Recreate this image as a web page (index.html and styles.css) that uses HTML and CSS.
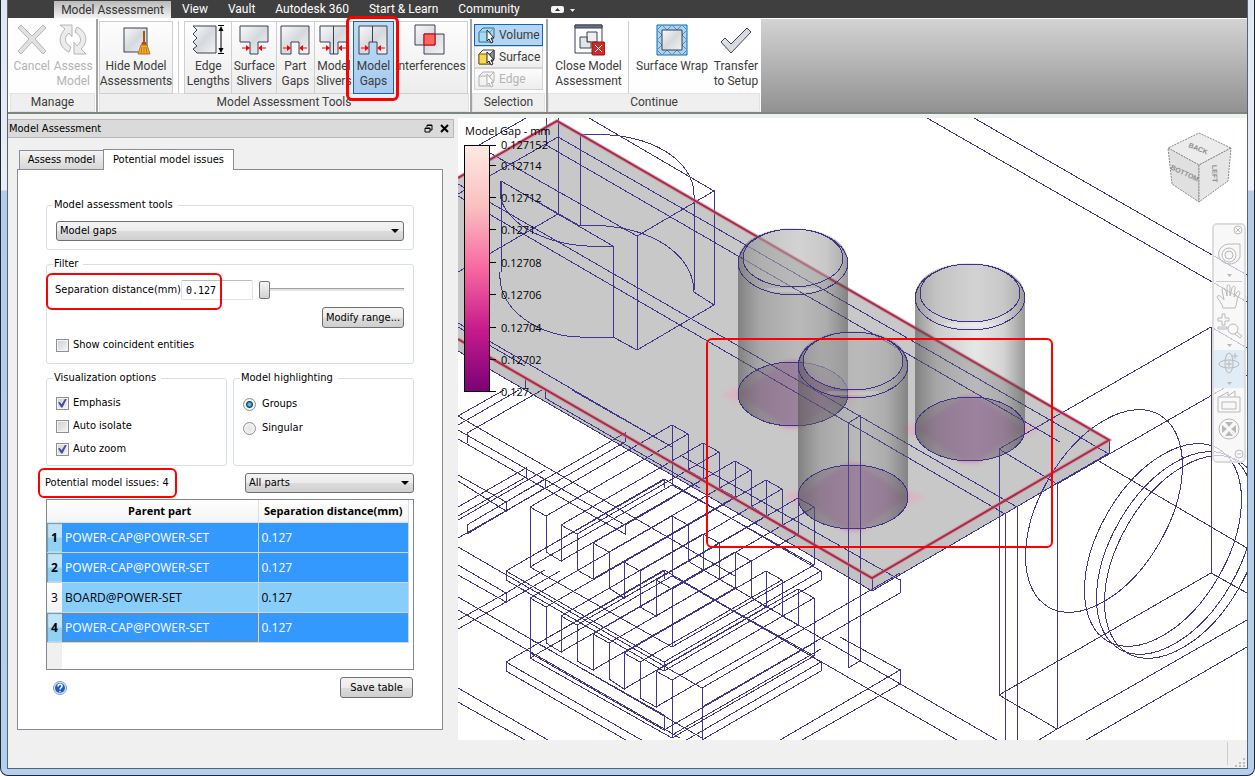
FILE: index.html
```html
<!DOCTYPE html>
<html lang="en">
<head>
<meta charset="utf-8">
<title>Model Assessment</title>
<link rel="stylesheet" href="styles.css">
</head>
<body>
<div class="window">
<div class="client">
<header class="ribbon">
  <nav class="tabs">
    <button class="tab active">Model Assessment</button>
    <button class="tab">View</button>
    <button class="tab">Vault</button>
    <button class="tab">Autodesk 360</button>
    <button class="tab">Start &amp; Learn</button>
    <button class="tab">Community</button>
    <button class="tab pill" aria-label="Minimize ribbon"><svg width="28" height="14" viewBox="0 0 28 14"><rect x="1" y="4" width="13" height="7" rx="2" fill="#f4f4f4"/><path d="M5 9l2.500-3L10 9z" fill="#333"/><path d="M20 7h5l-2.500 3z" fill="#eee"/></svg></button>
  </nav>
  <div class="panels">
    <section class="panel manage">
      <div class="tools">
        <button class="tool" disabled><svg class="icon" viewBox="0 0 32 32"><path d="M2 4l3-3 11 11L27 1l3 3-11 11 11 12-3 3-11-12L5 30l-3-3 11-12z" fill="#e2e2e2" stroke="#b5b5b5"/></svg><span>Cancel</span></button>
        <button class="tool" disabled><svg class="icon" viewBox="0 0 32 32"><path d="M3 1h12v12l-3-4c-5 4-5 10 2 14l-2 5C1 23 1 12 8 5zM29 30H17V18l3 4c5-4 5-10-2-14l2-5c11 5 11 16 4 22z" fill="#ececec" stroke="#b5b5b5"/></svg><span>Assess<br>Model</span></button>
      </div>
      <h2>Manage</h2>
    </section>
    <section class="panel assess">
      <div class="tools">
        <button class="tool boxed hide"><svg class="icon" viewBox="0 0 32 32"><rect x="4" y="4" width="23" height="24" fill="url(#steel)" stroke="#3b4150"/><path d="M23 7h2v12h-2z" fill="#9a5a1c"/><path d="M22 18h4l1 4H21z" fill="#b84a20"/><path d="M21 21h6l3 9H18z" fill="#f2b32c" stroke="#b9771a"/><path d="M22 23l-1 7M24 23v7M26 23l1 7" stroke="#b9771a"/></svg><span>Hide Model<br>Assessments</span></button>
        <i class="rule"></i>
        <button class="tool boxed edge"><svg class="icon" viewBox="0 0 32 32"><path d="M24 2H1l4 4-4 4 4 4-4 4 4 4-4 3 4 4h19z" fill="url(#steel)" stroke="#3b4150"/><path d="M26 1.500h6M26 29.500h6M29 4v23" stroke="#000"/><path d="M29 2l2.500 5h-5zM29 29l2.500-5h-5z"/></svg><span>Edge<br>Lengths</span></button>
        <button class="tool boxed surf"><svg class="icon" viewBox="0 0 32 32"><path d="M2 2h28v16H20v12h-8V18H2z" fill="url(#steel)" stroke="#3b4150"/><g id="inward" fill="#f00" stroke="#f00"><path d="M4 24h5M28 24h-5"/><path d="M12 24l-4-3v6zM20 24l4-3v6z" stroke="none"/></g></svg><span>Surface<br>Slivers</span></button>
        <button class="tool boxed gaps"><svg class="icon" viewBox="0 0 32 32"><path d="M2 2h28v28H20V18h-8v12H2z" fill="url(#steel)" stroke="#3b4150"/><use href="#inward"/></svg><span>Part<br>Gaps</span></button>
        <button class="tool boxed"><svg class="icon" viewBox="0 0 32 32"><path d="M2 2h28v16H20v12h-8V18H2z" fill="url(#steel)" stroke="#3b4150"/><path d="M15.500 2v28" stroke="#3b4150"/><use href="#inward"/></svg><span>Model<br>Slivers</span></button>
        <button class="tool boxed picked"><svg class="icon" viewBox="0 0 32 32"><path d="M2 2h28v28H20V18h-8v12H2z" fill="url(#steel)" stroke="#3b4150"/><path d="M15.500 2v16" stroke="#3b4150"/><use href="#inward"/></svg><span>Model<br>Gaps</span><i class="callout"></i></button>
        <button class="tool boxed inter"><svg class="icon" viewBox="0 0 32 32"><path d="M1 1h20v20H1zM10 10h20v20H10z" fill="url(#steel)" stroke="#3b4150"/><path d="M10 10h11v11H10z" fill="#ff6464" stroke="#c00000"/></svg><span>Interferences</span></button>
      </div>
      <h2>Model Assessment Tools</h2>
    </section>
    <section class="panel selection">
      <div class="modes">
        <button class="mode picked"><svg width="18" height="18" viewBox="0 0 18 18"><path d="M1 6l4-4h11v9l-4 5H1z" fill="#a6dcf3" stroke="#2c6a92"/><path d="M1 6h11v10M12 6l4-4" fill="none" stroke="#5fa0c4"/><path id="pointer" d="M9 4v11l2-2 2 4 2-1-2-4h3z" fill="#fff" stroke="#222"/></svg>Volume</button>
        <button class="mode"><svg width="18" height="18" viewBox="0 0 18 18"><path d="M1 6l4-4h11v9l-4 5H1z" fill="#f4f4f4" stroke="#444"/><path d="M1 6h11v10H1z" fill="#f6d94c" stroke="#7a6410"/><path d="M12 6l4-4v9l-4 5z" fill="#8b93a3" stroke="#444"/><use href="#pointer"/></svg>Surface</button>
        <button class="mode" disabled><svg width="18" height="18" viewBox="0 0 18 18" fill="none" stroke="#b0b0b0"><path d="M1 6l4-4h11v9l-4 5H1zM1 6h11v10M12 6l4-4"/><path d="M9 4v11l2-2 2 4 2-1-2-4h3z" fill="#fff"/></svg>Edge</button>
      </div>
      <h2>Selection</h2>
    </section>
    <section class="panel continue">
      <div class="tools">
        <button class="tool close"><svg class="icon" viewBox="0 0 32 32"><path d="M2 1h27v28H2z" fill="#fff" stroke="#3b4150"/><path d="M2 1h27v3H2z" fill="#6d7482" stroke="#3b4150"/><path d="M14 8h10v10H14z" fill="#eee" stroke="#3b4150"/><path d="M14 13H7v11h11v-6h-4z" fill="#e2e4e8" stroke="#3b4150"/><rect x="19" y="18" width="13" height="13" rx="1" fill="#cf2a27" stroke="#8e1512"/><path d="M22 21l7 7M29 21l-7 7" stroke="#fff"/></svg><span>Close Model<br>Assessment</span></button>
        <i class="rule"></i>
        <button class="tool wrap"><svg class="icon" viewBox="0 0 32 32"><path d="M1 1h30v30H1z" fill="#a9d3ee" stroke="#1467ab"/><path d="M1 6l5-5 5 5 5-5 5 5 5-5 5 5-5 5 5 5-5 5 5 5-5 5-5-5-5 5-5-5-5 5-5-5 5-5-5-5 5-5z" fill="none" stroke="#4d93c6"/><path d="M6 6h20v20H6z" fill="url(#steel)" stroke="#3b4150"/></svg><span>Surface Wrap</span></button>
        <button class="tool transfer"><svg class="icon" viewBox="0 0 32 32"><path d="M1 18l4-4 6 6L27 4l4 4-20 21z" fill="url(#steel)" stroke="#3b4150"/></svg><span>Transfer<br>to Setup</span></button>
      </div>
      <h2>Continue</h2>
    </section>
  </div>
</header>
<main class="workspace">
  <aside class="dock">
    <div class="dock-title"><h1>Model Assessment</h1>
      <button aria-label="Float"><svg width="9" height="9" viewBox="0 0 9 9" fill="none" stroke="#000"><path d="M3 3V1h5v5H6M3 1.500h5"/><path d="M1 4h5v4H1zM1 4.500h5"/></svg></button>
      <button aria-label="Close"><svg width="9" height="9" viewBox="0 0 9 9" stroke="#000" stroke-width="2"><path d="M1 1l7 7M8 1L1 8"/></svg></button>
    </div>
    <div class="page-tabs" role="tablist">
      <button role="tab">Assess model</button>
      <button role="tab" class="current" aria-selected="true">Potential model issues</button>
    </div>
    <div class="page">
      <fieldset class="tools-box">
        <legend>Model assessment tools</legend>
        <span class="drop"><select aria-label="Model assessment tools"><option>Model gaps</option></select></span>
      </fieldset>
      <fieldset class="filter-box">
        <legend>Filter</legend>
        <div class="distance">
          <label for="distance">Separation distance(mm)</label>
          <input id="distance" type="text" value="0.127">
          <input class="slider" type="range" value="0" aria-label="Separation distance slider">
          <i class="callout"></i>
        </div>
        <button class="push modify">Modify range...</button>
        <label class="check coincident"><input type="checkbox">Show coincident entities</label>
      </fieldset>
      <div class="pair">
        <fieldset class="visual-box">
          <legend>Visualization options</legend>
          <label class="check"><input type="checkbox" checked>Emphasis</label>
          <label class="check"><input type="checkbox">Auto isolate</label>
          <label class="check"><input type="checkbox" checked>Auto zoom</label>
        </fieldset>
        <fieldset class="highlight-box">
          <legend>Model highlighting</legend>
          <label class="check"><input type="radio" name="mode" checked>Groups</label>
          <label class="check"><input type="radio" name="mode">Singular</label>
        </fieldset>
      </div>
      <div class="issues">
        <p>Potential model issues: 4<i class="callout"></i></p>
        <span class="drop"><select aria-label="Parts"><option>All parts</option></select></span>
      </div>
      <div class="grid">
        <table>
          <thead><tr><th></th><th>Parent part</th><th>Separation distance(mm)</th></tr></thead>
          <tbody>
            <tr class="on"><th>1</th><td>POWER-CAP@POWER-SET</td><td>0.127</td></tr>
            <tr class="on"><th>2</th><td>POWER-CAP@POWER-SET</td><td>0.127</td></tr>
            <tr class="part"><th>3</th><td>BOARD@POWER-SET</td><td>0.127</td></tr>
            <tr class="on"><th>4</th><td class="focus">POWER-CAP@POWER-SET</td><td>0.127</td></tr>
          </tbody>
        </table>
      </div>
      <div class="foot">
        <button class="help" aria-label="Help"><svg width="14" height="14" viewBox="0 0 14 14"><circle cx="7" cy="7" r="6.500" fill="#dfeaf8" stroke="#7b9cc9"/><circle cx="7" cy="7" r="5" fill="#1d5bd0"/><path d="M5 5.500c0-3 4-3 4-.5 0 2-2 1.500-2 3.500M7 10v1.300" fill="none" stroke="#fff" stroke-width="1.500"/></svg></button>
        <button class="push save">Save table</button>
      </div>
    </div>
  </aside>
  <section class="viewport">
    <svg class="scene" viewBox="458 118 789 622" preserveAspectRatio="xMinYMin slice">
      <defs>
        <linearGradient id="steel" x2="1" y2="1"><stop stop-color="#fafafa"/><stop offset=".5" stop-color="#d5d8dd"/><stop offset="1" stop-color="#f4f4f4"/></linearGradient>
        <linearGradient id="scale" x2="0" y2="1"><stop stop-color="#fee9e2"/><stop offset=".25" stop-color="#fabfc0"/><stop offset=".5" stop-color="#f768a1"/><stop offset=".75" stop-color="#c51b8a"/><stop offset="1" stop-color="#7a0177"/></linearGradient>
        <linearGradient id="tube"><stop stop-color="#555" stop-opacity=".62"/><stop offset=".2" stop-color="#666" stop-opacity=".34"/><stop offset=".55" stop-color="#777" stop-opacity=".18"/><stop offset=".8" stop-color="#666" stop-opacity=".28"/><stop offset="1" stop-color="#555" stop-opacity=".6"/></linearGradient>
        <filter id="soft" x="-20%" y="-20%" width="140%" height="140%"><feGaussianBlur stdDeviation="2"/></filter>
        <g id="footprint">
          <path d="M-72 0L-45-11 0-37 45-11 72 0 45 14 8 36H-8L-45 14z" fill="#e6a9bd" opacity=".55" filter="url(#soft)"/>
          <ellipse rx="55" ry="32" fill="#a79aa7"/>
          <path d="M-55 0L-8-32H8L55 0 8 32H-8z" fill="#a585a6" filter="url(#soft)"/>
        </g>
        <g id="can">
          <path d="M-55-132C-55-152-31-166 0-166S55-152 55-132V0C55 18 31 32 0 32S-55 18-55 0z" fill="url(#tube)"/>
          <ellipse cy="-136" rx="50" ry="29" fill="#bbb" fill-opacity=".45"/>
          <path d="M-26-105C-10-102 10-102 26-105" fill="none" stroke="#fff" stroke-opacity=".45" stroke-width="3" filter="url(#soft)"/>
          <g fill="none" stroke="#3d3488" shape-rendering="crispEdges"><ellipse rx="55" ry="32"/><ellipse cy="-136" rx="50" ry="29"/><path d="M-55-132C-55-114-31-99 0-99S55-114 55-132C53-150 31-165 0-165S-53-150-55-132"/></g>
        </g>
        <g id="sink">
          <path d="M530 567V507L546 516V552L561 561V525L577 534V570L593 579V543L609 552V588L624 598V562L640 571V607L656 616V580L672 589V647M672 485V425L688 434V470L703 479V443L719 452V488L735 497V461L751 470V506L766 516V480L782 489V525L798 534V498L814 507V565"/>
          <path d="M530 507L672 425M546 516L688 434M561 525L703 443M577 534L719 452M561 561L703 479M593 543L735 461M593 579L735 497M609 552L751 470M624 562L766 480M624 598L766 516M640 571L782 489M656 580L798 498M656 616L798 534M672 589L814 507"/>
          <path d="M530 567L672 647L814 565L672 485ZM506 571L664 479L821 571L664 662ZM506 580L664 671L821 580M506 571v9M664 479v9M821 571v9M664 662v9M530 557L664 480"/>
        </g>
      </defs>
      <rect x="458" y="118" width="789" height="622" fill="#fff"/>
      <path d="M458 178L557 121L1109 440V453L872 591L458 351Z" fill="#c8c8c8"/>
      <path d="M458 340L872 578L1109 440V453L872 591L458 351Z" fill="#c2c2c2"/>
      <use href="#footprint" x="793" y="394"/><use href="#footprint" x="970" y="429"/><use href="#footprint" x="853" y="497"/>
      <g class="wire">
        <path d="M526 118L479 145M546 118V145M558 118V214M546 145L1060 442M558 137L1109 454M558 137L458 194M558 214L458 272M490 153L637 236L714 191V305L637 350V236M589 118L714 191M501 181L613 246V337L637 350M501 181V272M580 135V226M580 135C650 130 694 160 694 195V200V290M580 226C640 221 694 250 694 292L714 305M580 226L501 181M500 181V195C505 225 550 250 613 246M500 272C497 310 540 337 580 337H613"/>
        <path d="M458 184L1017 507M458 196L1005 514M848 423L860 416V661L848 668ZM1005 514V740M1017 507V740M458 323L672 447M458 327L525 366M572 390L672 447"/>
        <path d="M927 118L1247 302M974 118L1247 275M1211 327L1247 348M1211 327L999 449V695L1211 573V327M1211 573L1247 593M1247 375L1057 484V729L1247 620M999 449L1057 484M1097 460L1247 548M999 695L1057 729L1039 740M1086 740L1247 647M1109 440V453L872 591V578M872 591L458 351"/>
        <ellipse cx="1104" cy="511" rx="64" ry="111" transform="rotate(30 1104 511)"/><ellipse cx="1163" cy="545" rx="64" ry="111" transform="rotate(30 1163 545)"/><ellipse cx="1175" cy="553" rx="64" ry="111" transform="rotate(30 1175 553)"/><ellipse cx="1183" cy="557" rx="64" ry="111" transform="rotate(30 1183 557)"/>
        <use href="#sink"/><use href="#sink" y="91"/>
        <path d="M467 443V433L542 390M458 430L625 525V534L458 439M458 416L504 390M458 425L519 390M625 525L672 498M458 507L526 468V477L458 516M458 475L506 502V511L458 481M506 502L625 433V442L506 511M467 534V525L545 479V488L467 534M458 520L545 470M458 538L530 497M458 416L735 576M525 378V388M545 390V398L700 488M458 547L664 666M458 565L506 593V602L458 575M506 593L545 570M458 620L506 593M458 629L506 602M458 597L702 738M458 610L680 738M506 602L560 571"/>
        <path d="M458 688L548 740M458 702L525 740M780 740L900 670V684L802 740M840 637L900 670M700 568L997 740M700 592L957 740M900 579V593L702 707M702 740V688L900 573M702 688L664 666M680 455L900 580M672 735L821 649M664 715V730L530 653M664 715L530 639M664 730L814 643"/>
      </g>
      <path d="M458 178L557 121L1109 440L872 578L458 339" fill="none" stroke="#c98b9b" stroke-width="4" stroke-opacity=".6"/>
      <path d="M458 178L557 121L1109 440L872 578L458 339" fill="none" stroke="#ad2846" stroke-width="2"/>
      <use href="#can" x="793" y="394"/><use href="#can" x="970" y="429"/><use href="#can" x="853" y="497"/>
      <rect class="mark" x="707" y="339" width="345" height="208" rx="5"/>
      <rect x="464.500" y="145.500" width="25" height="246" fill="url(#scale)" stroke="#000"/>
      <path d="M490 145.500h6M490 165.500h6M490 197.500h6M490 229.500h6M490 262.500h6M490 294.500h6M490 327.500h6M490 359.500h6M490 391.500h6" stroke="#000"/>
      <g class="scale-text"><text x="465" y="135">Model Gap - mm</text><text x="501" y="149">0.127152</text><text x="501" y="170">0.12714</text><text x="501" y="202">0.12712</text><text x="501" y="234">0.1271</text><text x="501" y="267">0.12708</text><text x="501" y="299">0.12706</text><text x="501" y="332">0.12704</text><text x="501" y="364">0.12702</text><text x="501" y="396">0.127</text></g>
      <g class="cube"><path d="M1199 133L1231 148L1199 165L1168 148Z" fill="#ececec"/><path d="M1168 148L1199 165V202L1172 184Z" fill="#e0e0e0"/><path d="M1231 148L1199 165V202L1228 181Z" fill="#e6e6e6"/><text transform="translate(1188 147) rotate(22)">BACK</text><text transform="translate(1170 169) rotate(25)">BOTTOM</text><text transform="translate(1212 165) rotate(88)">LEFT</text></g>
    </svg>
    <nav class="navbar">
      <button aria-label="Close bar"><svg width="30" height="14"><circle cx="24" cy="5" r="4"/><path d="M22 3l4 4M26 3l-4 4"/></svg></button>
      <button aria-label="Wheel"><svg width="30" height="42"><path d="M15 5h11v13a11 10 0 1 1-11-13z"/><circle cx="15" cy="16" r="7"/><circle cx="15" cy="16" r="4"/><path class="solid" d="M13 35h5l-2.500 3z"/></svg></button>
      <hr>
      <button aria-label="Pan"><svg width="30" height="30"><path d="M9 26C8 21 5 19 3 15c1-3 4-1 7 3L8 8c0-3 3-2 4 1l1 5V5c0-3 3-3 3 0v9l2-8c1-3 4-2 3 1l-1 8 3-5c2-2 4 0 2 3-3 5-2 10-4 13H11z"/></svg></button>
      <button aria-label="Zoom"><svg width="30" height="38"><path d="M8 2h3v4h4v3h-4v4H8V9H4V6h4zM4 15h9v2H4z"/><circle cx="19" cy="17" r="5"/><path d="M23 20l5 4-2 2-5-4z"/><path class="solid" d="M13 32h5l-2.500 3z"/></svg></button>
      <button class="hot" aria-label="Orbit"><svg width="30" height="38"><ellipse cx="15" cy="13" rx="4" ry="10"/><ellipse cx="15" cy="14" rx="10" ry="4"/><path d="M15 11v6M12 14h6M18 6h6M21 3v6"/><path class="solid" d="M13 32h5l-2.500 3z"/></svg></button>
      <button aria-label="Look at"><svg width="30" height="27"><path d="M4 9h22v15H4zM8 14h14v7H8zM5 9l9-5v4l7-5v6"/></svg></button>
      <button aria-label="Center"><svg width="30" height="31"><circle cx="15" cy="14" r="10"/><path class="solid" d="M15 12l-4-5h8zM15 16l-4 5h8zM13 14l-5-4v8zM17 14l5-4v8z"/></svg></button>
      <button aria-label="Options"><svg width="30" height="15"><circle cx="25" cy="8" r="4"/><path d="M23 8h4"/></svg></button>
    </nav>
  </section>
</main>
<footer class="status"><svg width="22" height="28" viewBox="0 0 22 28"><path d="M2.500 2v23" stroke="#ccc"/><path d="M18 18h2v2h-2zM18 22h2v2h-2zM14 22h2v2h-2zM10 25h2v2h-2zM14 25h2v2h-2zM18 25h2v2h-2z" fill="#bdbdbd"/></svg></footer>
</div>
</div>
</body>
</html>
```
FILE: styles.css
```css
* { box-sizing: border-box; }
body { margin: 0; background: #fff; font: 11px/14px "DejaVu Sans Condensed", "DejaVu Sans", sans-serif; color: #000; }
button, input, select { font: inherit; color: inherit; margin: 0; padding: 0; border: 0; background: none; }
h1, h2, p { margin: 0; font: inherit; }
.window { min-height: 100vh; display: flex; padding: 0 6px 6px; border: solid #23272e; border-width: 0 1px 1px; border-radius: 0 0 8px 8px; background: linear-gradient(#dde8f4, #e8eff8 190px, #b4cce8 191px, #b4d0ee); }
.client { flex: 1; min-width: 0; display: flex; flex-direction: column; border: solid #596370; border-width: 0 1px 1px; background: #f0f0f0; }
.callout { position: absolute; border: 2px solid #f00; border-radius: 6px; pointer-events: none; }

.ribbon { font: 12px/15px Roboto, "Open Sans", sans-serif; color: #3c3c3c; background: linear-gradient(#d4d4d4, #858585) 0 18px no-repeat; border-bottom: 2px solid #7d857f; }
.tabs { display: flex; height: 18px; padding-left: 46px; background: #3f3f3f; }
.tab { padding: 0 10px; color: #fff; line-height: 18px; white-space: nowrap; }
.tab.active { margin: 1px 1px 0 0; padding: 0; width: 117px; line-height: 16px; color: #333; background: linear-gradient(#b9b9b9, #f3f3f3); }
.pill { padding: 2px 20px; }
.pill svg { display: block; }
.panels { display: flex; height: 94px; border-top: 1px solid #fff; }
.panel { display: flex; flex-direction: column; padding: 2px 2px 1px; background: linear-gradient(#fff, #fdfdfd); border-right: 2px solid #a3a3a3; }
.panel h2 { margin-top: auto; height: 17px; line-height: 17px; text-align: center; background: #efefef; box-shadow: 0 0 0 1px #e2e2e2; }
.tools { display: flex; }
.tool { position: relative; display: flex; flex-direction: column; align-items: center; width: 40px; height: 73px; padding-top: 3px; line-height: 15px; white-space: nowrap; }
.tool span { margin-top: 3px; }
.tool:disabled, .mode:disabled { color: #b4b4b4; }
.icon { width: 32px; height: 32px; flex: none; display: block; }
.boxed { border: 1px solid #cfcfcf; margin-left: -1px; padding-top: 2px; background: linear-gradient(#fdfdfd, #ededed); width: 41px; }
.picked { border-color: #1763b8; background: linear-gradient(#c2dbf4, #a5cbf0); z-index: 1; }
.picked .callout { inset: -6px -6px -8px -8px; border-width: 3px; }
.rule { width: 1px; height: 72px; background: #ccc; }
.manage { width: 90px; padding-left: 3px; }
.manage .tool { width: 42px; }
.assess { width: 374px; }
.hide { width: 74px; margin: 0 5px 0 -1px; }
.edge { width: 49px; margin-left: 5px; }
.surf { width: 46px; }
.gaps { width: 39px; }
.inter { width: 76px; }
.selection { width: 76px; padding-left: 1px; }
.modes { padding: 3px 1px 0; display: grid; }
.mode { display: flex; align-items: center; gap: 3px; height: 22px; padding-left: 3px; border: 1px solid #d4d4d4; background: linear-gradient(#fcfcfc, #eee); }
.mode.picked { border-color: #1763b8; background: #b5d5f4; }
.continue { width: 213px; padding-left: 1px; border: 0; }
.close { width: 79px; }
.wrap { width: 86px; }
.transfer { width: 42px; }

.workspace { flex: 1; display: flex; gap: 4px; padding-top: 4px; min-height: 0; }
.dock { width: 446px; flex: none; padding-top: 1px; }
.dock-title { display: flex; align-items: center; height: 19px; gap: 7px; padding: 0 4px 0 1px; border: 1px solid #b9b9b9; border-left: 0; background: #dadada; }
.dock-title h1 { flex: 1; }
.dock-title button, .dock-title svg { display: block; }
.page-tabs { display: flex; align-items: flex-end; padding: 11px 0 0 11px; }
.page-tabs button { width: 85px; height: 19px; border: 1px solid #8c8c96; border-bottom: 0; background: linear-gradient(#f4f4f4, #d6d6d6); }
.page-tabs .current { width: 131px; height: 21px; margin: 0 0 -1px -1px; background: #fff; position: relative; }
.page { margin: 0 11px 0 9px; padding: 28px 28px 31px; display: grid; gap: 7px; border: 1px solid #8c8c96; background: #fff; }
fieldset { display: flex; flex-direction: column; min-width: 0; margin: 0; padding: 9px 9px 8px; border: 1px solid #d5dfe5; border-radius: 3px; }
legend { margin-left: -3px; padding: 0 5px 0 1px; height: 14px; }
.drop { position: relative; display: block; }
.drop select { appearance: none; display: block; width: 100%; height: 20px; padding: 0 3px; border: 1px solid #707070; border-radius: 3px; background: linear-gradient(#f4f4f4, #ebebeb 50%, #dcdcdc 51%, #d0d0d0); }
.drop::after { content: ""; position: absolute; right: 5px; top: 8px; border: 4px solid transparent; border-top-color: #000; border-bottom: 0; }
.filter-box { padding: 9px 9px 11px; }
.distance { position: relative; display: flex; align-items: center; height: 20px; }
.distance label { width: 126px; margin-left: -1px; white-space: nowrap; }
.distance input[type=text] { width: 72px; height: 20px; padding: 0 4px; border: 1px solid #e0e3e8; border-top-color: #b8bcc4; border-radius: 2px; font: 10px/14px "DejaVu Sans Mono", monospace; background: #fff; }
.distance .callout { left: -10px; top: -7px; width: 176px; height: 37px; }
.slider { appearance: none; flex: 1; min-width: 0; height: 20px; margin-left: 6px; background: linear-gradient(#a0a0a0, #a0a0a0) 0 8px / 100% 1px no-repeat, linear-gradient(#e4e4e4, #e4e4e4) 0 9px / 100% 2px no-repeat; }
.slider::-webkit-slider-thumb { appearance: none; width: 11px; height: 18px; border: 1px solid #777; border-radius: 2px; background: linear-gradient(#f4f4f4, #d2d2d2); }
.push { height: 21px; border: 1px solid #707070; border-radius: 3px; background: linear-gradient(#f4f4f4, #ebebeb 50%, #dcdcdc 51%, #cfcfcf); }
.modify { align-self: flex-end; width: 82px; margin: 7px 0 10px; }
.check { display: flex; align-items: center; gap: 4px; height: 14px; }
.check input { appearance: none; width: 13px; height: 13px; border: 1px solid #8e8f8f; background: linear-gradient(135deg, #cbcfd5, #f6f6f6); box-shadow: inset 0 0 0 1px #f4f4f4; }
.check input[type=checkbox]:checked::before { content: ""; display: block; width: 9px; height: 9px; margin: 1px; background: #44519a; clip-path: polygon(0 45%, 20% 40%, 40% 65%, 80% 0, 100% 0, 50% 100%, 35% 100%); }
.check input[type=radio] { border-radius: 50%; background: radial-gradient(#e4e4e4, #f8f8f8); }
.check input[type=radio]:checked { background: radial-gradient(circle, #5cc0e8 0 1px, #12466e 3px, #f4f4f4 4px); }
.pair { display: grid; grid-template-columns: 1fr 1fr; gap: 6px; }
.visual-box { padding: 11px 9px 9px; }
.visual-box .check + .check { margin-top: 9px; }
.highlight-box { padding-top: 12px; }
.highlight-box .check { gap: 6px; }
.highlight-box .check + .check { margin-top: 10px; }
.issues { display: flex; justify-content: space-between; align-items: center; height: 20px; margin-bottom: -1px; }
.issues p { position: relative; margin-left: -1px; }
.issues .callout { inset: -8px -8px -8px -7px; }
.issues .drop { width: 169px; }
.grid { height: 171px; border: 1px solid #828790; font: 12px/15px "Open Sans", "Noto Sans", sans-serif; background: linear-gradient(#f0f0f0, #f0f0f0) 0 0 / 15px 100% no-repeat, #fff; }
table { width: 362px; border-collapse: collapse; table-layout: fixed; }
th, td { padding: 0 3px; text-align: left; white-space: nowrap; border-right: 1px solid #d4d4d4; border-bottom: 1px solid #d4d4d4; }
th:first-child { width: 15px; padding: 0 2px 0 4px; border-right: 0; }
thead th { height: 22px; text-align: center; padding: 0; font-weight: bold; font-size: 11px; background: linear-gradient(#fff, #f3f4f5); border-color: #dedfe1; }
thead th:nth-child(2) { width: 196px; }
tbody tr { height: 30px; }
tbody th { font-weight: normal; background: linear-gradient(#fff, #f2f2f2); }
.on { color: #fff; background: #3399ff; }
.part { background: #87cefa; }
.on th { color: #000; font-weight: bold; background: linear-gradient(#bfe4f7 50%, #8fd2f4 51%); box-shadow: inset 1px 1px 1px #5f9fbe; }
.focus { outline: 1px dotted #c87020; outline-offset: -2px; }
.foot { display: flex; justify-content: space-between; align-items: center; padding: 0 1px 0 7px; }
.help, .help svg { display: block; }
.save { width: 73px; }

.viewport { position: relative; flex: 1; min-width: 0; overflow: hidden; background: #fff; }
.scene { display: block; width: 100%; }
.wire { fill: none; stroke: #40378c; shape-rendering: crispEdges; }
.mark { fill: none; stroke: #f00; stroke-width: 2; }
.scale-text { font: 11px "Open Sans", "Noto Sans", sans-serif; }
.cube path { stroke: #8a8a8a; stroke-dasharray: 2 1; }
.cube text { font: bold 7px "Liberation Sans", sans-serif; fill: #8d8d8d; }
.navbar { position: absolute; top: 105px; right: 1px; width: 34px; display: grid; border: 2px solid #dcdcdc; border-radius: 5px; background: rgba(245, 245, 245, .75); }
.navbar button, .navbar svg { display: block; }
.navbar svg { fill: none; stroke: #b9b9b9; }
.navbar .solid { fill: #b9b9b9; stroke: none; }
.navbar hr { width: 26px; height: 1px; margin: 0 auto; border: 0; background: #ccc; }
.hot { background: #e0edf7; }
.status { display: flex; justify-content: flex-end; height: 28px; }
.status svg { display: block; }
```
